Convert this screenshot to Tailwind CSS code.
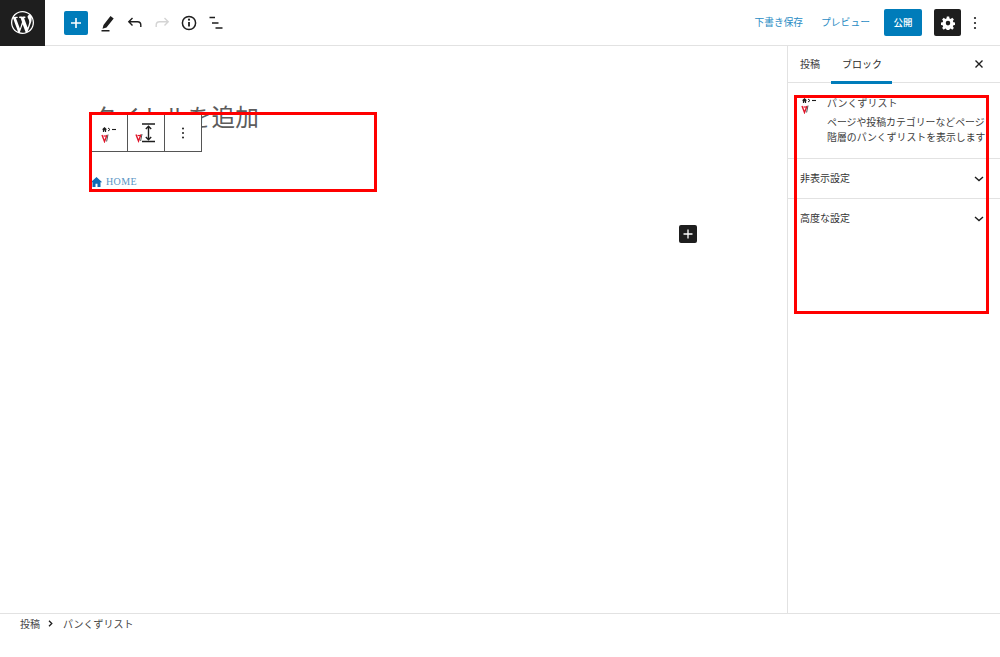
<!DOCTYPE html>
<html lang="ja">
<head>
<meta charset="UTF-8">
<title>投稿を編集</title>
<script src="https://cdn.jsdelivr.net/npm/@tailwindcss/browser@4"></script>
</head>
<body class="bg-white text-[#1e1e1e] font-['Noto_Sans_CJK_JP','Noto_Sans',sans-serif]">
<div class="relative flex h-[657px] w-[1000px] flex-col overflow-hidden">

  <!-- Top bar -->
  <header class="flex h-[46px] shrink-0 items-center border-b border-[#e2e2e2]">
    <div class="flex h-[46px] w-[45px] items-center justify-center bg-[#1e1e1e]">
      <svg width="23" height="23" viewBox="0 0 20 20" fill="#fff"><path d="M20 10c0-5.51-4.49-10-10-10C4.48 0 0 4.49 0 10c0 5.52 4.48 10 10 10 5.51 0 10-4.48 10-10zM7.78 15.37L4.37 6.22c.55-.02 1.17-.08 1.17-.08.5-.06.44-1.13-.06-1.11 0 0-1.45.11-2.37.11-.18 0-.37 0-.58-.01C4.12 2.69 6.87 1.11 10 1.11c2.33 0 4.45.87 6.05 2.34-.68-.11-1.65.39-1.65 1.58 0 .74.45 1.36.9 2.1.35.61.55 1.36.55 2.46 0 1.49-1.4 5-1.4 5l-3.03-8.37c.54-.02.82-.17.82-.17.5-.05.44-1.25-.06-1.22 0 0-1.44.12-2.38.12-.87 0-2.33-.12-2.33-.12-.5-.03-.56 1.2-.06 1.22l.92.08 1.26 3.41zM17.41 10c.24-.64.74-1.87.43-4.25.7 1.29 1.05 2.71 1.05 4.25 0 3.29-1.73 6.24-4.4 7.78.97-2.59 1.94-5.2 2.92-7.78zM6.1 18.09C3.12 16.65 1.11 13.53 1.11 10c0-1.3.23-2.48.72-3.59C3.25 10.3 4.67 14.2 6.1 18.09zm4.03-6.63l2.58 6.98c-.86.29-1.76.45-2.71.45-.79 0-1.57-.11-2.29-.33.81-2.38 1.62-4.74 2.42-7.1z"/></svg>
    </div>
    <div class="ml-[19px] flex h-6 w-6 items-center justify-center rounded-[2px] bg-[#007cba]">
      <svg width="14" height="14" viewBox="0 0 14 14"><path d="M7 2v10M2 7h10" stroke="#fff" stroke-width="1.6"/></svg>
    </div>
    <div class="ml-[7px] flex items-center gap-[7px]">
      <svg width="24" height="24" viewBox="0 0 24 24" fill="#1e1e1e"><path d="M8.5 14l7-9 3.2 2.4-7.2 9.2-4 1.2 1-3.8zM6.5 19h8v1.5h-8z"/></svg>
      <svg class="-ml-px" width="20" height="20" viewBox="0 0 20 20" fill="none" stroke="#1e1e1e" stroke-width="1.4"><path d="M7.5 5L3.8 8.7l3.7 3.7M4 8.7h8.5c2 0 3.3 1.4 3.3 3.3v2"/></svg>
      <svg width="20" height="20" viewBox="0 0 20 20" fill="none" stroke="#d4d4d4" stroke-width="1.4"><path d="M12.5 5l3.7 3.7-3.7 3.7M16 8.7H7.5c-2 0-3.3 1.4-3.3 3.3v2"/></svg>
      <svg width="20" height="20" viewBox="0 0 20 20" fill="none"><circle cx="10" cy="10" r="6.6" stroke="#1e1e1e" stroke-width="1.5"/><path d="M10 9v4.6" stroke="#1e1e1e" stroke-width="1.8"/><circle cx="10" cy="6.7" r="1.1" fill="#1e1e1e"/></svg>
      <svg width="20" height="20" viewBox="0 0 20 20" fill="none" stroke="#1e1e1e" stroke-width="1.5"><path d="M3.5 4.5H9M6 10h6.5M9.5 15h7"/></svg>
    </div>
    <div class="ml-auto mr-[12px] flex items-center">
      <span class="-mt-[1px] text-[9.7px] text-[#2a8cc4]">下書き保存</span>
      <span class="-mt-[1px] ml-[18px] text-[9.8px] text-[#2a8cc4]">プレビュー</span>
      <span class="ml-[14px] flex h-[27px] w-[38px] items-center justify-center rounded-[2px] bg-[#007cba] text-[9.5px] font-medium text-white">公開</span>
      <span class="ml-[12px] flex h-[27px] w-[27px] items-center justify-center rounded-[2px] bg-[#1e1e1e]">
        <svg width="14" height="14" viewBox="0 0 24 24" fill="#fff"><path fill-rule="evenodd" d="M10 1h4l.6 3.2 2 .8 2.7-1.8 2.8 2.8-1.8 2.7.9 2 3 .6v4l-3 .6-.9 2 1.8 2.7-2.8 2.8-2.7-1.8-2 .9-.6 3h-4l-.6-3-2-.9-2.7 1.8-2.8-2.8 1.8-2.7-.9-2-3-.6v-4l3-.6.9-2-1.8-2.7 2.8-2.8L7.4 5l2-.8L10 1zM12 8.3a3.9 3.9 0 100 7.8 3.9 3.9 0 000-7.8z"/></svg>
      </span>
      <span class="flex w-[27px] justify-center">
        <svg width="4" height="14" viewBox="0 0 4 14" fill="#1e1e1e"><circle cx="2" cy="2" r="1.1"/><circle cx="2" cy="7" r="1.1"/><circle cx="2" cy="12" r="1.1"/></svg>
      </span>
    </div>
  </header>

  <div class="flex min-h-0 flex-1">
    <!-- Editor canvas -->
    <main class="relative flex-1">
      <h1 class="pl-[93px] pt-[54px] font-['Liberation_Serif','Noto_Sans_CJK_JP',serif] text-[23.7px] font-normal leading-[36px] text-[#5c5c5c]">タイトルを追加</h1>
      <div class="mt-[38px] flex items-center gap-[3px] pl-[90px]">
        <svg width="13" height="12" viewBox="0 0 13 12" fill="#0f6cb5"><path d="M6.5 1L.8 6.2h1.7V11h3V7.8h2V11h3V6.2h1.7z"/></svg>
        <span class="font-['Liberation_Serif',serif] text-[10px] tracking-[.4px] text-[#5a96c4]">HOME</span>
      </div>
      <div class="absolute left-[679px] top-[179px] flex h-[18px] w-[18px] items-center justify-center rounded-[2px] bg-[#1e1e1e]">
        <svg width="12" height="12" viewBox="0 0 12 12"><path d="M6 1.5v9M1.5 6h9" stroke="#fff" stroke-width="1.3"/></svg>
      </div>
    </main>

    <!-- Settings sidebar -->
    <aside class="w-[213px] shrink-0 border-l border-[#e2e2e2]">
      <div class="flex h-[37px] items-center border-b border-[#e2e2e2] text-[10px]">
        <span class="ml-[12px] -mt-[2px] text-[#3c3c3c]">投稿</span>
        <span class="relative ml-[22px] flex h-[37px] items-center pb-[2px] text-[#2a2a2a]">ブロック
          <span class="absolute -left-[11px] -right-[10px] bottom-[-1px] h-[3px] bg-[#007cba]"></span>
        </span>
        <svg class="ml-auto mr-[16px]" width="10" height="10" viewBox="0 0 10 10"><path d="M1.5 1.5l7 7M8.5 1.5l-7 7" stroke="#1e1e1e" stroke-width="1.4"/></svg>
      </div>
      <div class="flex h-[76px] gap-[10px] border-b border-[#e2e2e2] pl-[13px] pt-[12px]">
        <svg class="mt-[2px] shrink-0" width="16" height="17" viewBox="0 0 16 17">
          <path d="M3.5 1L.9 3.5h1V6h1.2V4.6h.8V6h1.2V3.5h1z" fill="#1e1e1e"/>
          <path d="M7 2l2 1.5L7 5" fill="none" stroke="#1e1e1e" stroke-width="1"/>
          <path d="M11 3.5h4" stroke="#1e1e1e" stroke-width="1.1"/>
          <path d="M1 9l2.5 6.5L6 9" fill="none" stroke="#e0162b" stroke-width="1.4"/>
          <path d="M2.5 10h3" stroke="#e0162b" stroke-width="1.2"/>
          <path d="M7 8.5l-1.4 7" stroke="#555" stroke-width="1"/>
        </svg>
        <div class="w-[175px] overflow-hidden whitespace-nowrap">
          <p class="text-[10px] leading-[16px] text-[#444]">パンくずリスト</p>
          <p class="mt-[4px] text-[9.9px] leading-[15px] text-[#3c3c3c]">ページや投稿カテゴリーなどページ<br>階層のパンくずリストを表示します</p>
        </div>
      </div>
      <div class="flex h-[40px] items-center justify-between border-b border-[#e2e2e2] pb-[3px] pl-[12px] pr-[16px] text-[10px] text-[#333]">
        <span>非表示設定</span>
        <svg class="mt-[3px]" width="10" height="6" viewBox="0 0 10 6" fill="none" stroke="#1e1e1e" stroke-width="1.4"><path d="M1 1l4 3.5L9 1"/></svg>
      </div>
      <div class="flex h-[40px] items-center justify-between pb-[3px] pl-[12px] pr-[16px] text-[10px] text-[#333]">
        <span>高度な設定</span>
        <svg class="mt-[3px]" width="10" height="6" viewBox="0 0 10 6" fill="none" stroke="#1e1e1e" stroke-width="1.4"><path d="M1 1l4 3.5L9 1"/></svg>
      </div>
    </aside>
  </div>

  <!-- Breadcrumb footer -->
  <footer class="flex h-[44px] shrink-0 items-start gap-[8px] border-t border-[#e2e2e2] pl-[20px] pt-[1px] text-[10px] leading-[17px] text-[#444]">
    <span>投稿</span>
    <svg class="mt-[5px] mr-[2px]" width="5" height="7" viewBox="0 0 5 7" fill="none" stroke="#1e1e1e" stroke-width="1.3"><path d="M1 .8L3.8 3.5 1 6.2"/></svg>
    <span>パンくずリスト</span>
  </footer>

  <!-- Block toolbar, floats over the title -->
  <div class="absolute left-[90px] top-[114px] flex h-[38px] w-[112px] border border-[#555] bg-white">
    <div class="flex w-[37px] items-center justify-center border-r border-[#555]">
      <svg class="mt-[2px]" width="16" height="17" viewBox="0 0 16 17">
        <path d="M3.5 1L.9 3.5h1V6h1.2V4.6h.8V6h1.2V3.5h1z" fill="#1e1e1e"/>
        <path d="M7 2l2 1.5L7 5" fill="none" stroke="#1e1e1e" stroke-width="1"/>
        <path d="M11 3.5h4" stroke="#1e1e1e" stroke-width="1.1"/>
        <path d="M1 9l2.5 6.5L6 9" fill="none" stroke="#e0162b" stroke-width="1.4"/>
        <path d="M2.5 10h3" stroke="#e0162b" stroke-width="1.2"/>
        <path d="M7 8.5l-1.4 7" stroke="#555" stroke-width="1"/>
      </svg>
    </div>
    <div class="flex w-[37px] items-center justify-center border-r border-[#555]">
      <svg width="22" height="22" viewBox="0 0 22 22">
        <path d="M1 12.5l2.5 6.5L6 12.5" fill="none" stroke="#e0162b" stroke-width="1.4"/>
        <path d="M2.5 13.5h3" stroke="#e0162b" stroke-width="1.2"/>
        <path d="M7 12l-1.4 7" stroke="#555"/>
        <path d="M7 2h13M7 19.5h13" stroke="#1e1e1e" stroke-width="1.5"/>
        <path d="M13.5 4.5v13M10.8 7l2.7-2.7L16.2 7M10.8 15l2.7 2.7 2.7-2.7" fill="none" stroke="#1e1e1e" stroke-width="1.4"/>
      </svg>
    </div>
    <div class="flex flex-1 items-center justify-center">
      <svg width="4" height="12" viewBox="0 0 4 12" fill="#1e1e1e"><circle cx="2" cy="1.5" r="1"/><circle cx="2" cy="6" r="1"/><circle cx="2" cy="10.5" r="1"/></svg>
    </div>
  </div>

  <!-- Red annotation frames -->
  <div class="absolute left-[89px] top-[112px] h-[80px] w-[288px] border-[3px] border-[#f00]"></div>
  <div class="absolute left-[794px] top-[95px] h-[219px] w-[195px] border-[3px] border-[#f00]"></div>
</div>
</body>
</html>
